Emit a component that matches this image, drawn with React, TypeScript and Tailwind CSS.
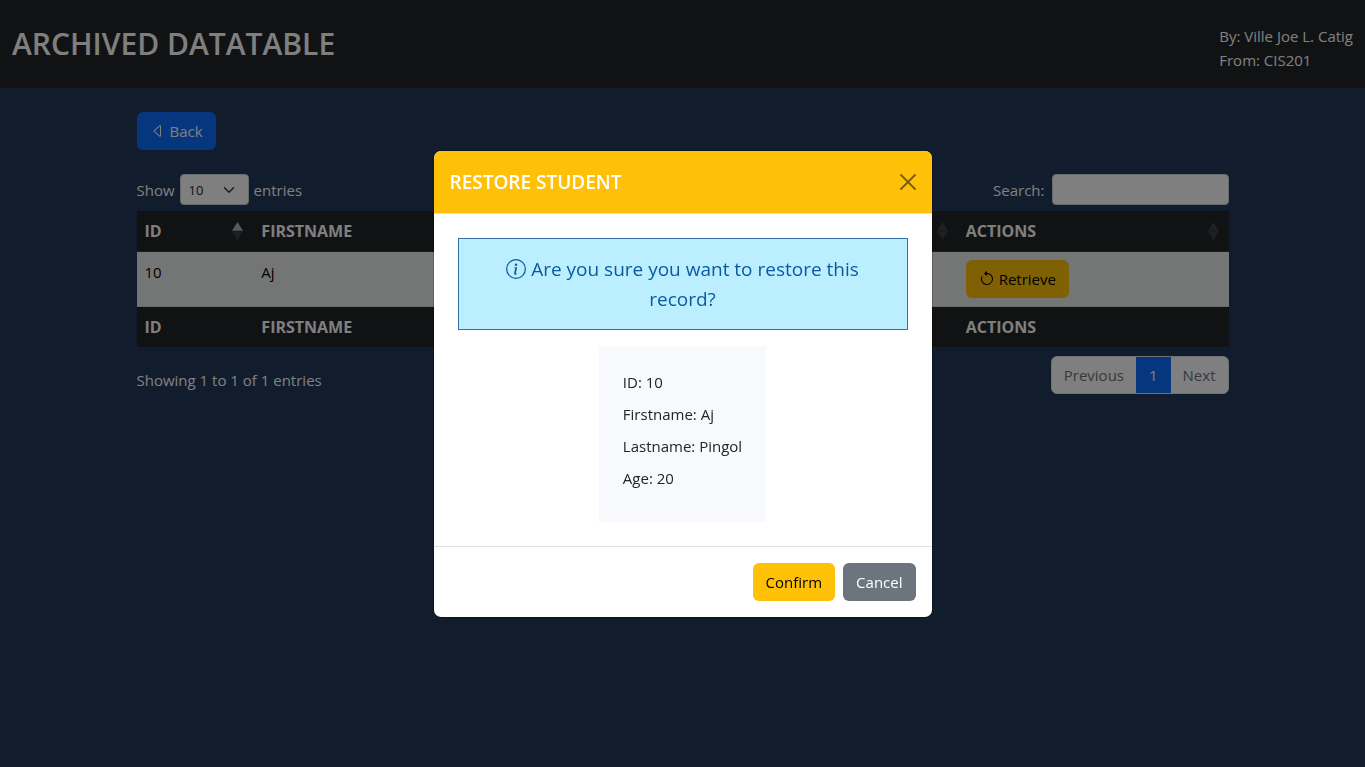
import { BsArrowCounterclockwise, BsCaretLeft, BsInfoCircle } from "react-icons/bs";

const columns = ["ID", "FIRSTNAME", "LASTNAME", "AGE", "ACTIONS"];

const student = { id: 10, firstname: "Aj", lastname: "Pingol", age: 20 };

function SortMark({ ascending }: { ascending: boolean }) {
  return (
    <svg viewBox="0 0 11 18" className="h-[18px] w-[11px] shrink-0" aria-hidden="true">
      <path d="M5.5 0 11 8.8H0z" fill="#fff" fillOpacity={ascending ? 0.65 : 0.125} />
      <path d="M5.5 18 0 9.2h11z" fill="#fff" fillOpacity={0.125} />
    </svg>
  );
}

function CloseMark() {
  return (
    <svg viewBox="0 0 16 16" className="size-4" fill="#000" aria-hidden="true">
      <path d="M.293.293a1 1 0 0 1 1.414 0L8 6.586 14.293.293a1 1 0 1 1 1.414 1.414L9.414 8l6.293 6.293a1 1 0 0 1-1.414 1.414L8 9.414l-6.293 6.293a1 1 0 0 1-1.414-1.414L6.586 8 .293 1.707a1 1 0 0 1 0-1.414z" />
    </svg>
  );
}

function StudentTable() {
  return (
    <table className="mt-1.5 w-full table-fixed border-collapse text-left">
      <colgroup>
        <col className="w-[10.7%]" />
        <col className="w-[23.6%]" />
        <col className="w-[23.6%]" />
        <col className="w-[17.3%]" />
        <col className="w-[24.8%]" />
      </colgroup>
      <thead className="bg-[#212529] text-base text-white">
        <tr className="border-b border-[#373b3e]">
          {columns.map((name, i) => (
            <th key={name} scope="col" className="py-2 pr-2.5 pl-2 font-bold">
              <span className="flex items-center justify-between">
                {name}
                <SortMark ascending={i === 0} />
              </span>
            </th>
          ))}
        </tr>
      </thead>
      <tbody className="bg-[#e9ecec] align-top text-black">
        <tr className="border-b border-[#d5d6d7]">
          <td className="p-2">{student.id}</td>
          <td className="p-2">{student.firstname}</td>
          <td className="p-2">{student.lastname}</td>
          <td className="p-2">{student.age}</td>
          <td className="p-2">
            <button type="button" className="flex h-[38px] items-center gap-1 rounded-md bg-[#ffc107] px-[13px]">
              <BsArrowCounterclockwise className="size-4" />
              Retrieve
            </button>
          </td>
        </tr>
      </tbody>
      <tfoot className="bg-[#212529] text-base text-white">
        <tr>
          {columns.map((name) => (
            <th key={name} scope="col" className="p-2 font-bold">
              {name}
            </th>
          ))}
        </tr>
      </tfoot>
    </table>
  );
}

function RestoreDialog() {
  return (
    <div className="fixed inset-0 z-10 flex items-center justify-center bg-black/50">
      <div
        role="dialog"
        aria-modal="true"
        aria-labelledby="restore-title"
        className="w-full max-w-[500px] overflow-hidden rounded-lg border border-black/20 bg-white bg-clip-padding"
      >
        <div className="flex items-center justify-between border-b border-[#dee2e6] bg-[#ffc107] p-4">
          <h2 id="restore-title" className="text-[19px] leading-[30px] font-semibold text-white">
            RESTORE STUDENT
          </h2>
          <button type="button" aria-label="Close" className="opacity-50">
            <CloseMark />
          </button>
        </div>
        <div className="p-6">
          <p className="border border-[#3571a8] bg-[#bbeeff] px-8 py-[15px] text-center text-[19px] leading-[30px] text-[#0c5a9e]">
            <BsInfoCircle className="mr-[5px] inline size-5 align-[-3px]" />
            Are you sure you want to restore this record?
          </p>
          <div className="mx-auto mt-4 w-fit bg-[#f8f9fc] p-6 text-[#212529]">
            <p className="mb-2">ID: {student.id}</p>
            <p className="mb-2">Firstname: {student.firstname}</p>
            <p className="mb-2">Lastname: {student.lastname}</p>
            <p className="mb-2">Age: {student.age}</p>
          </div>
        </div>
        <div className="flex justify-end gap-2 border-t border-[#dee2e6] p-4">
          <button type="button" className="h-[38px] rounded-md bg-[#ffc107] px-[13px] text-black">
            Confirm
          </button>
          <button type="button" className="h-[38px] rounded-md bg-[#6c757d] px-[13px] text-white">
            Cancel
          </button>
        </div>
      </div>
    </div>
  );
}

export default function App() {
  return (
    <div className="min-h-screen bg-[#22385a] font-['Open_Sans','Noto_Sans',sans-serif] text-[15px] leading-6 text-white">
      <header className="flex items-center justify-between bg-[#212529] px-3 py-4">
        <h1 className="text-[30px] leading-[56px] font-semibold">ARCHIVED DATATABLE</h1>
        <div className="pt-2">
          <p>By: Ville Joe L. Catig</p>
          <p>From: CIS201</p>
        </div>
      </header>

      <main className="mx-auto max-w-[1140px] p-6">
        <a href="#" className="inline-flex h-[38px] items-center gap-1 rounded-md bg-[#0d6efd] px-[13px]">
          <BsCaretLeft className="size-4" />
          Back
        </a>

        <div className="mt-6 flex items-center justify-between">
          <label className="flex items-center gap-[5px]">
            Show
            <span className="relative">
              <select className="block h-[31px] w-[69px] appearance-none rounded border border-[#ced4da] bg-white pl-2 text-[13px] text-[#212529]">
                <option>10</option>
                <option>25</option>
                <option>50</option>
                <option>100</option>
              </select>
              <svg
                viewBox="0 0 16 16"
                className="pointer-events-none absolute top-2.5 right-3.5 size-3"
                fill="none"
                stroke="#343a40"
                strokeWidth="2"
                strokeLinecap="round"
                strokeLinejoin="round"
                aria-hidden="true"
              >
                <path d="m2 5 6 6 6-6" />
              </svg>
            </span>
            entries
          </label>
          <label className="flex items-center gap-[7px]">
            Search:
            <input type="search" className="h-[31px] w-[177px] rounded border border-[#ced4da] bg-white px-2 text-[#212529]" />
          </label>
        </div>

        <StudentTable />

        <div className="mt-[9px] flex items-center justify-between">
          <p className="mt-2.5">Showing 1 to 1 of 1 entries</p>
          <nav aria-label="Table pages" className="flex h-[38px] overflow-hidden rounded-md border border-[#dee2e6] bg-white text-[#6c757d]">
            <button type="button" className="px-3">
              Previous
            </button>
            <button type="button" className="-my-px bg-[#0d6efd] px-[13px] text-white">
              1
            </button>
            <button type="button" className="px-3">
              Next
            </button>
          </nav>
        </div>
      </main>

      <RestoreDialog />
    </div>
  );
}
